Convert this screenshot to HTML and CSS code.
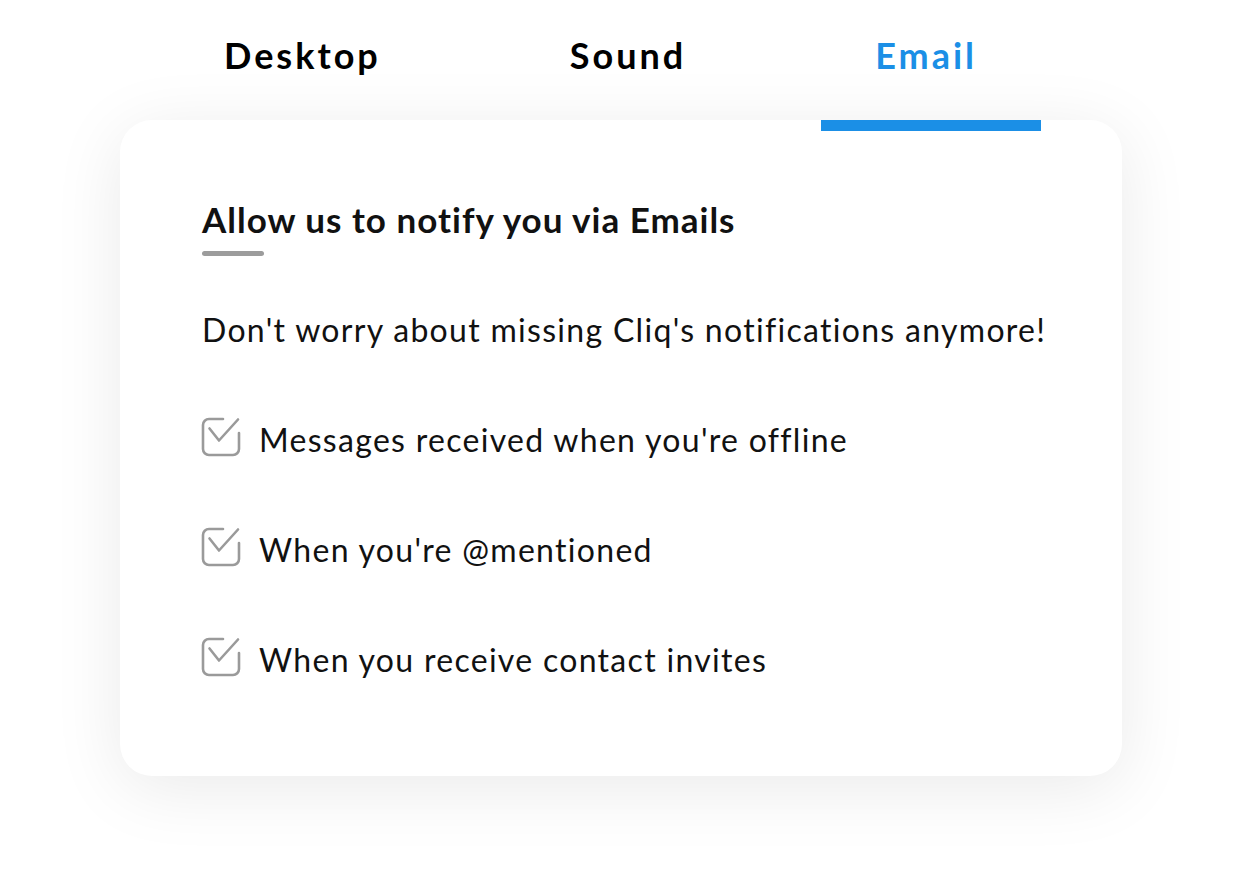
FILE: index.html
```html
<!DOCTYPE html>
<html lang="en">
<head>
<meta charset="utf-8">
<title>Email notifications</title>
<link rel="stylesheet" href="styles.css">
</head>
<body>
<div class="page">
  <nav class="tabs">
    <div class="tab">Desktop</div>
    <div class="tab">Sound</div>
    <div class="tab active">Email</div>
  </nav>
  <section class="card">
    <h2 class="title">Allow us to notify you via Emails</h2>
    <div class="rule"></div>
    <ul class="list">
      <li class="intro">Don't worry about missing Cliq's notifications anymore!</li>
      <li class="item">
        <svg class="check" viewBox="0 0 40 40" width="40" height="40" aria-hidden="true"><path d="M38 16 V32 a6 6 0 0 1 -6 6 H8 a6 6 0 0 1 -6 -6 V8 a6 6 0 0 1 6 -6 H22"/><path d="M8.5 11.5 L18 23.5 L37 2.5"/></svg>
        <span>Messages received when you're offline</span>
      </li>
      <li class="item">
        <svg class="check" viewBox="0 0 40 40" width="40" height="40" aria-hidden="true"><path d="M38 16 V32 a6 6 0 0 1 -6 6 H8 a6 6 0 0 1 -6 -6 V8 a6 6 0 0 1 6 -6 H22"/><path d="M8.5 11.5 L18 23.5 L37 2.5"/></svg>
        <span>When you're @mentioned</span>
      </li>
      <li class="item">
        <svg class="check" viewBox="0 0 40 40" width="40" height="40" aria-hidden="true"><path d="M38 16 V32 a6 6 0 0 1 -6 6 H8 a6 6 0 0 1 -6 -6 V8 a6 6 0 0 1 6 -6 H22"/><path d="M8.5 11.5 L18 23.5 L37 2.5"/></svg>
        <span>When you receive contact invites</span>
      </li>
    </ul>
  </section>
</div>
</body>
</html>
```
FILE: styles.css
```css
* { box-sizing: border-box; }
html, body { margin: 0; padding: 0; background: #ffffff; }
body { font-family: Lato, "Open Sans", sans-serif; color: #111111; }
.page { width: 1242px; height: 894px; padding-left: 120px; }
.tabs {
  display: flex;
  height: 120px;
  padding-top: 35px;
  padding-left: 50px;
  gap: 71px;
}
.tab {
  position: relative;
  height: 85px;
  padding: 0 64px 0 54px;
  font-size: 36px;
  line-height: 40px;
  font-weight: 700;
  letter-spacing: 3px;
  color: #000000;
}
.tab.active { color: #1b8fe6; }
.tab.active::after {
  content: "";
  position: absolute;
  left: 0;
  right: 0;
  top: 85px;
  height: 11px;
  background: #1b8fe6;
  z-index: 2;
}
.card {
  width: 1002px;
  height: 656px;
  background: #ffffff;
  border-radius: 32px;
  box-shadow: 0 12px 70px rgba(0, 0, 0, 0.085);
  padding: 79px 30px 0 82px;
}
.title {
  margin: 0;
  font-size: 35px;
  line-height: 40px;
  font-weight: 700;
  letter-spacing: 1px;
  color: #111111;
}
.rule {
  width: 62px;
  height: 5px;
  border-radius: 3px;
  background: #9c9c9c;
  margin-top: 12px;
}
.list {
  list-style: none;
  margin: 54px 0 0;
  padding: 0;
  display: flex;
  flex-direction: column;
  gap: 70px;
}
.list li {
  font-size: 32px;
  line-height: 40px;
  letter-spacing: 1.3px;
  color: #111111;
  white-space: nowrap;
}
.item {
  display: flex;
  align-items: center;
  gap: 18px;
}
.check {
  width: 40px;
  height: 40px;
  margin-left: -1px;
  margin-top: -6px;
  fill: none;
  stroke: #9a9a9a;
  stroke-width: 2.6;
  stroke-linecap: round;
  stroke-linejoin: round;
  flex: none;
}
```
